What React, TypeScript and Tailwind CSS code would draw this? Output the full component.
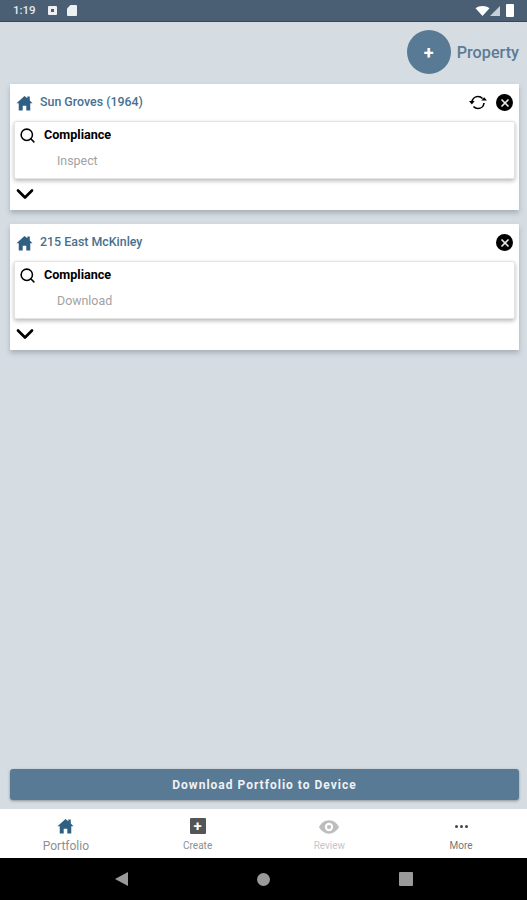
import { ChevronDown, Search, X } from "lucide-react";

function HomeIcon({ className }: { className: string }) {
  return (
    <svg viewBox="0 0 18 16" className={className} fill="currentColor">
      <path d="M9 0.5 0.5 8.2h2.4V16h4.2v-5h3.8v5h4.2V8.2h2.400L14.600 5.300V1h-2.600v2L9 0.500z" />
    </svg>
  );
}

function PropertyCard({ name, action, sync }: { name: string; action: string; sync?: boolean }) {
  return (
    <div className="h-[126px] bg-white shadow-[0_3px_5px_rgba(60,70,80,0.3)] flex flex-col">
      <div className="h-[37px] flex items-center pl-[6px] pr-[6px]">
        <HomeIcon className="w-[17px] h-[16px] text-[#2f5f82]" />
        <span className="ml-[7px] text-[12.4px] font-medium text-[#47708f]">{name}</span>
        <div className="ml-auto flex items-center gap-[8px]">
          {sync && (
            <svg viewBox="0 0 20 18" className="w-[20px] h-[17px] text-black" fill="none" stroke="currentColor" strokeWidth="1.7">
              <path d="M3.600 8.500C4 5 6.700 2.600 10 2.600c2 0 3.600.8 4.800 2.100" />
              <path d="M16.400 9.500c-.4 3.500-3.100 5.900-6.400 5.900-2 0-3.600-.8-4.800-2.100" />
              <path d="M0.500 7.500h6L3.500 11z" fill="currentColor" stroke="none" />
              <path d="M13.500 7h6l-3-3.500z" fill="currentColor" stroke="none" />
            </svg>
          )}
          <div className="w-[17px] h-[17px] rounded-full bg-black flex items-center justify-center">
            <X size={12} strokeWidth={3.5} className="text-[#e8e8e8]" />
          </div>
        </div>
      </div>
      <div className="mx-[4px] h-[58px] bg-white rounded-[2px] border border-[#e4e4e4] shadow-[0_2px_4px_rgba(0,0,0,0.28)]">
        <div className="flex items-center h-[27px] pl-[4px]">
          <Search size={17} strokeWidth={2.2} className="text-black" />
          <span className="ml-[8px] text-[12.6px] font-bold text-black">Compliance</span>
        </div>
        <div className="pl-[42px] text-[12.4px] leading-[24px] text-[#a2a2a2]">{action}</div>
      </div>
      <div className="pl-[1px] pt-[1px]">
        <ChevronDown size={28} strokeWidth={2.3} className="text-black" />
      </div>
    </div>
  );
}

function NavItem({ label, labelClass, children }: { label: string; labelClass: string; children: React.ReactNode }) {
  return (
    <div className="flex-1 flex flex-col items-center pt-[8px]">
      <div className="h-[18px] flex items-center justify-center">{children}</div>
      <span className={labelClass}>{label}</span>
    </div>
  );
}

export default function App() {
  return (
    <div className="h-[900px] w-[527px] flex flex-col bg-[#d5dde3] font-['Roboto',sans-serif] overflow-hidden">
      <div className="h-[22px] bg-[#4a5f73] border-b border-[#2f4a60] flex items-center px-[13px] text-white shrink-0">
        <span className="text-[11.5px] font-medium text-[#e6ebef]">1:19</span>
        <div className="ml-[12px] w-[9px] h-[9px] bg-[#eef1f3] rounded-[1px] flex items-center justify-center">
          <div className="w-[3px] h-[3px] bg-[#4a5f73]" />
        </div>
        <svg viewBox="0 0 10 11" className="ml-[10px] w-[10px] h-[11px] text-[#eef1f3]" fill="currentColor">
          <path d="M3.500 0H9a1 1 0 0 1 1 1v9a1 1 0 0 1-1 1H1a1 1 0 0 1-1-1V3.500z" />
        </svg>
        <div className="ml-auto flex items-center">
          <svg viewBox="0 0 14 10" className="w-[15px] h-[10px] text-white" fill="currentColor">
            <path d="M0 2.200C2 .8 4.400 0 7 0s5 .8 7 2.200L7 10z" />
          </svg>
          <svg viewBox="0 0 10 10" className="w-[10px] h-[10px]" fill="#c9d0d6">
            <path d="M10 0v10H0z" />
          </svg>
          <div className="ml-[6px] w-[8px] h-[13px] bg-white rounded-[1px]" />
        </div>
      </div>

      <div className="flex-1 flex flex-col pl-[10px] pr-[8px]">
        <div className="h-[62px] flex items-center justify-end">
          <div className="w-[44px] h-[44px] rounded-full bg-[#597a94] flex items-center justify-center text-white text-[18px] font-bold mt-[-2px]">
            +
          </div>
          <span className="ml-[6px] text-[16.2px] font-medium text-[#5b7b95]">Property</span>
        </div>
        <div className="flex flex-col gap-[14px]">
          <PropertyCard name="Sun Groves (1964)" action="Inspect" sync />
          <PropertyCard name="215 East McKinley" action="Download" />
        </div>
        <div className="mt-auto mb-[9px] h-[31px] rounded-[3px] bg-[#597a94] shadow-[0_1px_3px_rgba(0,0,0,0.35)] flex items-center justify-center text-[12px] font-bold tracking-[1px] text-[#eef2f5]">
          Download Portfolio to Device
        </div>
      </div>

      <div className="h-[49px] bg-white flex shrink-0">
        <NavItem label="Portfolio" labelClass="text-[12px] leading-[14px] text-[#8a8f94] mt-[4px]">
          <HomeIcon className="w-[17px] h-[16px] text-[#2f5f82]" />
        </NavItem>
        <NavItem label="Create" labelClass="text-[10px] leading-[14px] text-[#8a8f94] mt-[4px]">
          <div className="w-[16px] h-[16px] bg-[#555] rounded-[1px] flex items-center justify-center text-white text-[15px] font-bold leading-none">+</div>
        </NavItem>
        <NavItem label="Review" labelClass="text-[10px] leading-[14px] text-[#c6c6c6] mt-[4px]">
          <svg viewBox="0 0 24 16" className="w-[20px] h-[14px] mt-[2px]" fill="#bdbdbd">
            <path fillRule="evenodd" d="M12 0C7 0 2.700 3.300 0 8c2.700 4.700 7 8 12 8s9.300-3.300 12-8c-2.700-4.700-7-8-12-8zm0 13a5 5 0 1 1 0-10 5 5 0 0 1 0 10zm0-2.500a2.500 2.500 0 1 0 0-5 2.500 2.500 0 0 0 0 5z" />
          </svg>
        </NavItem>
        <NavItem label="More" labelClass="text-[10px] leading-[14px] text-[#777] mt-[4px]">
          <div className="flex gap-[2px]">
            <div className="w-[3px] h-[3px] bg-[#444] rounded-full" />
            <div className="w-[3px] h-[3px] bg-[#444] rounded-full" />
            <div className="w-[3px] h-[3px] bg-[#444] rounded-full" />
          </div>
        </NavItem>
      </div>

      <div className="h-[42px] bg-black flex items-center justify-center gap-[129px] shrink-0">
        <svg viewBox="0 0 13 14" className="w-[13px] h-[14px]" fill="#9a9a9a">
          <path d="M13 0v14L0 7z" />
        </svg>
        <div className="w-[13px] h-[13px] rounded-full bg-[#9a9a9a]" />
        <div className="w-[14px] h-[14px] bg-[#9a9a9a] rounded-[1px]" />
      </div>
    </div>
  );
}
